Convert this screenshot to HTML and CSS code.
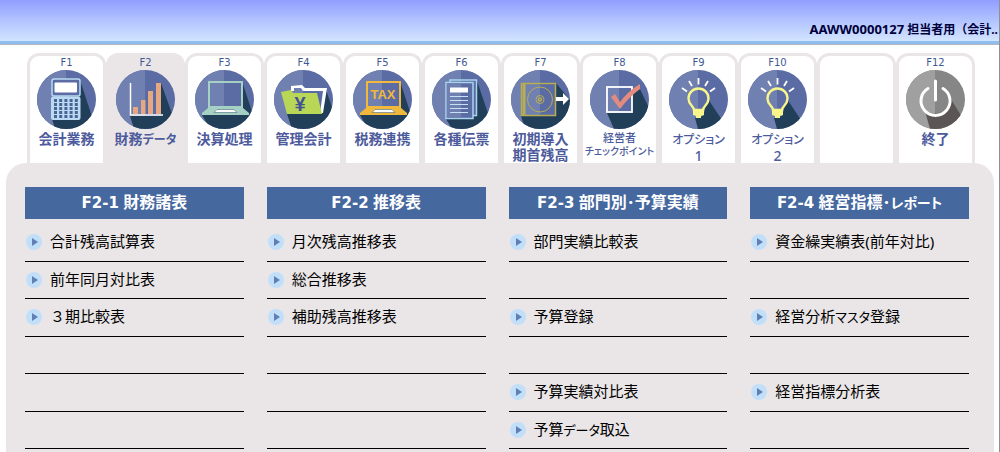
FILE: index.html
```html
<!DOCTYPE html>
<html lang="ja">
<head>
  <meta charset="UTF-8">
  <meta name="viewport" content="width=device-width, initial-scale=1.0">
  <title>財務データ</title>
  <link rel="stylesheet" href="styles.css">
</head>
<body>
  <!-- アイコン共通パーツ -->
  <svg class="defs" width="0" height="0" aria-hidden="true">
    <defs>
      <clipPath id="round"><circle cx="29.5" cy="29.5" r="29.5"/></clipPath>
      <g id="base">
        <rect width="59" height="59" fill="#5b6ba3"/>
        <rect width="29" height="59" fill="#7080b0"/>
      </g>
      <g id="laptop">
        <rect x="14" y="12" width="33" height="25" fill="none" stroke="currentColor" stroke-width="2"/>
        <path d="M13 38H48L54 43V45H7V43Z" fill="currentColor"/>
        <path d="M22 39.500H39L42 42.500H19Z" fill="#fff" stroke="#4a6b80" stroke-width=".6"/>
      </g>
      <g id="bulb">
        <path d="M39 29L59 59H29L26 48L34 46Z" fill="#213f58"/>
        <path d="M25 40C25 36 19.500 35 19.500 28.500A10 10 0 0 1 39.500 28.500C39.500 35 34 36 34 40Z" fill="none" stroke="#f8f58a" stroke-width="2.400"/>
        <path d="M24 39H35V45L32 46V48H27V46L24 45Z" fill="#f8f58a"/>
        <path d="M13 18L18 21.500M20 11L23 16M29.500 8V14.500M39 11L36 16M46 18L41 21.500" stroke="#fff" stroke-width="1.800"/>
      </g>
    </defs>
  </svg>

  <header class="topbar">
    <div class="user"><span class="user-id">AAWW0000127</span> 担当者用（会計..</div>
  </header>

  <nav class="tabs">
    <button class="tab" type="button">
      <span class="key">F1</span>
      <svg class="icon" viewBox="0 0 59 59"><g clip-path="url(#round)">
        <use href="#base"/>
        <path d="M43 10L59 59H18L15 49Z" fill="#213f58"/>
        <rect x="15" y="9" width="28" height="17" rx="2" fill="#5b6ba3" stroke="#b9daf2" stroke-width="1.500"/>
        <rect x="17.500" y="12.500" width="22.500" height="10" rx="1" fill="#fff"/>
        <rect x="14" y="26.500" width="29.500" height="23.500" rx="2" fill="#b9daf2"/>
        <path d="M17 30.500H41M17 34.500H41M17 38.500H41M17 42.500H41M17 46.500H41" stroke="#4b6292" stroke-width="2.800" stroke-dasharray="3 2.200"/>
      </g></svg>
      <span class="label">会計業務</span>
    </button>
    <button class="tab active" type="button">
      <span class="key">F2</span>
      <svg class="icon" viewBox="0 0 59 59"><g clip-path="url(#round)">
        <use href="#base"/>
        <path d="M45 13L59 52V59H18L14 46H45Z" fill="#213f58"/>
        <path d="M17 37H22V44H17ZM25 30H29.500V44H25ZM32 21H37V44H32ZM40 13H45V44H40Z" fill="#e5a883"/>
        <path d="M14.500 13V45H47" fill="none" stroke="#fff" stroke-width="1.500"/>
      </g></svg>
      <span class="label">財務<span class="kana">データ</span></span>
    </button>
    <button class="tab" type="button">
      <span class="key">F3</span>
      <svg class="icon icon-green" viewBox="0 0 59 59"><g clip-path="url(#round)">
        <use href="#base"/>
        <path d="M47 11L59 48V59H15L7 45H54L48 38Z" fill="#213f58"/>
        <use href="#laptop"/>
      </g></svg>
      <span class="label">決算処理</span>
    </button>
    <button class="tab" type="button">
      <span class="key">F4</span>
      <svg class="icon" viewBox="0 0 59 59"><g clip-path="url(#round)">
        <use href="#base"/>
        <path d="M13 44H48L52 20L59 40V59H18Z" fill="#213f58"/>
        <path d="M17 16L28 15L31 18H53L49 43H46L49 21H29L27 18H20V21H17Z" fill="#fff"/>
        <path d="M7 22L17 20L19 23H43L48 44H13Z" fill="#b8d757"/>
        <text x="26" y="41" font-size="20" class="icon-text yen">¥</text>
      </g></svg>
      <span class="label">管理会計</span>
    </button>
    <button class="tab" type="button">
      <span class="key">F5</span>
      <svg class="icon icon-yellow" viewBox="0 0 59 59"><g clip-path="url(#round)">
        <use href="#base"/>
        <path d="M47 11L59 48V59H15L7 45H54L48 38Z" fill="#213f58"/>
        <use href="#laptop"/>
        <text x="30" y="29" font-size="13" class="icon-text tax">TAX</text>
      </g></svg>
      <span class="label">税務連携</span>
    </button>
    <button class="tab" type="button">
      <span class="key">F6</span>
      <svg class="icon" viewBox="0 0 59 59"><g clip-path="url(#round)">
        <use href="#base"/>
        <path d="M45 11L59 52V59H20L14 49L45 46Z" fill="#213f58"/>
        <path d="M18 12V10H44.500V45.500H41" fill="none" stroke="#a9d4ee" stroke-width="1.500"/>
        <rect x="14" y="12.500" width="27" height="36" fill="#5b6ba3" stroke="#a9d4ee" stroke-width="1.500"/>
        <rect x="14.800" y="13.300" width="14.200" height="34.400" fill="#7080b0"/>
        <rect x="18" y="17.500" width="18" height="5" fill="#fff"/>
        <path d="M18 26.500H36M18 30.500H36M18 34.500H36M18 38.500H36M18 42.500H36" stroke="#c5e2f4"/>
      </g></svg>
      <span class="label">各種伝票</span>
    </button>
    <button class="tab" type="button">
      <span class="key">F7</span>
      <svg class="icon" viewBox="0 0 59 59"><g clip-path="url(#round)">
        <use href="#base"/>
        <path d="M45 13L59 30V59H14L10 46H45Z" fill="#213f58"/>
        <rect x="10.500" y="13.500" width="34" height="32" fill="#5b6ba3"/>
        <rect x="10.500" y="13.500" width="18.500" height="32" fill="#7080b0"/>
        <g fill="none" stroke="#b8ad52">
          <rect x="10.500" y="13.500" width="34" height="32" stroke-width="1.500"/>
          <path d="M13 13V46" stroke-width="3"/>
          <circle cx="29" cy="29.500" r="12.500"/>
          <circle cx="29" cy="29.500" r="4"/>
          <circle cx="29" cy="29.500" r="1.500" stroke-width="1.500"/>
        </g>
        <path d="M45 27H52V23L58 29L52 35V31H45Z" fill="#fff"/>
      </g></svg>
      <span class="label">初期導入<br>期首残高</span>
    </button>
    <button class="tab" type="button">
      <span class="key">F8</span>
      <svg class="icon" viewBox="0 0 59 59"><g clip-path="url(#round)">
        <use href="#base"/>
        <path d="M42 24L49 17L59 38V59H24L17 43H42Z" fill="#213f58"/>
        <rect x="17" y="17" width="25" height="25" fill="none" stroke="#fff" stroke-width="1.800"/>
        <path d="M21 27L25 24L30 32Q38 21 50 14V19Q39 27 30 39Z" fill="#e38b7e"/>
      </g></svg>
      <span class="label small">経営者<br><span class="kana">チェックポイント</span></span>
    </button>
    <button class="tab" type="button">
      <span class="key">F9</span>
      <svg class="icon" viewBox="0 0 59 59"><g clip-path="url(#round)">
        <use href="#base"/>
        <use href="#bulb"/>
      </g></svg>
      <span class="label light"><span class="kana">オプション</span><br>1</span>
    </button>
    <button class="tab" type="button">
      <span class="key">F10</span>
      <svg class="icon" viewBox="0 0 59 59"><g clip-path="url(#round)">
        <use href="#base"/>
        <use href="#bulb"/>
      </g></svg>
      <span class="label light"><span class="kana">オプション</span><br>2</span>
    </button>
    <div class="tab"></div>
    <button class="tab" type="button">
      <span class="key">F12</span>
      <svg class="icon" viewBox="0 0 59 59"><g clip-path="url(#round)">
        <rect width="59" height="59" fill="#868686"/>
        <rect width="29" height="59" fill="#a0a0a0"/>
        <path d="M40 21L59 52V59H24L19 41Z" fill="#5b5555"/>
        <circle cx="29.500" cy="30.500" r="13" fill="#868686"/>
        <path d="M29 17.500A13 13 0 0 0 29 43.500Z" fill="#a0a0a0"/>
        <path d="M22 18.500A14.500 14.500 0 1 0 37 18.500M29.500 11V30" fill="none" stroke="#fff" stroke-width="3" stroke-linecap="round"/>
      </g></svg>
      <span class="label">終了</span>
    </button>
  </nav>

  <main class="panel">
    <section class="group">
      <h2><span class="code">F2-1</span> 財務諸表</h2>
      <ul>
        <li><a href="#">合計残高試算表</a></li>
        <li><a href="#">前年同月対比表</a></li>
        <li><a href="#">３期比較表</a></li>
        <li></li>
        <li></li>
        <li></li>
      </ul>
    </section>
    <section class="group">
      <h2><span class="code">F2-2</span> 推移表</h2>
      <ul>
        <li><a href="#">月次残高推移表</a></li>
        <li><a href="#">総合推移表</a></li>
        <li><a href="#">補助残高推移表</a></li>
        <li></li>
        <li></li>
        <li></li>
      </ul>
    </section>
    <section class="group">
      <h2><span class="code">F2-3</span> 部門別･予算実績</h2>
      <ul>
        <li><a href="#">部門実績比較表</a></li>
        <li></li>
        <li><a href="#">予算登録</a></li>
        <li></li>
        <li><a href="#">予算実績対比表</a></li>
        <li><a href="#">予算<span class="kana">データ</span>取込</a></li>
      </ul>
    </section>
    <section class="group">
      <h2><span class="code">F2-4</span> 経営指標･<span class="kana">レポート</span></h2>
      <ul>
        <li><a href="#">資金繰実績表(前年対比)</a></li>
        <li></li>
        <li><a href="#">経営分析<span class="kana">マスタ</span>登録</a></li>
        <li></li>
        <li><a href="#">経営指標分析表</a></li>
        <li></li>
      </ul>
    </section>
  </main>
</body>
</html>
```
FILE: styles.css
```css
* {
  box-sizing: border-box;
}

body {
  margin: 0;
  min-height: 100vh;
  display: flex;
  flex-direction: column;
  border-right: 1px solid #8f8f99;
  background-color: #fff;
  font-family: "Noto Sans", "Noto Sans CJK JP", sans-serif;
}

.defs {
  position: absolute;
}

/* ヘッダー */
.topbar {
  height: 45px;
  display: flex;
  justify-content: flex-end;
  align-items: flex-end;
  padding: 0 1px 4px 0;
  background: linear-gradient(#929eff, #b4c6ff 50%, #d8e9ff);
  border-bottom: 1px solid #b5b5bd;
  box-shadow: inset 0 -3px #8fbdf0;
}

.user {
  color: #00003c;
  font-size: 12px;
  font-weight: bold;
  line-height: 20px;
  white-space: nowrap;
}

.user-id {
  font-size: 13px;
}

/* カタカナは詰めて小さめに */
.kana {
  font-size: 13px;
  font-feature-settings: "palt";
}

/* タブ */
.tabs {
  display: grid;
  grid-template-columns: repeat(12, minmax(0, 1fr));
  margin: 8px 24px 0 27px;
}

.tab {
  height: 110px;
  display: flex;
  flex-direction: column;
  align-items: center;
  margin: 0;
  padding: 0;
  border: 3px solid #eae6e7;
  border-bottom: none;
  border-radius: 12px 12px 0 0;
  background-color: #fff;
  color: #4d5b9c;
  font: inherit;
  cursor: pointer;
}

.tab.active {
  background-color: #eae6e7;
}

.key {
  color: #3f5a92;
  font-family: "DejaVu Sans", sans-serif;
  font-size: 10px;
  line-height: 14px;
}

.icon {
  width: 59px;
  height: 59px;
  flex: none;
}

.icon-green {
  color: #a5d1c4;
}

.icon-yellow {
  color: #f0b93c;
}

.icon-text {
  font-family: "Liberation Sans", sans-serif;
  font-weight: bold;
  text-anchor: middle;
}

.yen {
  fill: #44538f;
}

.tax {
  fill: #f0b93c;
}

.label {
  margin: 2px -3px 0;
  font-size: 14px;
  font-weight: bold;
  line-height: 16px;
  white-space: nowrap;
}

.label .kana {
  font-size: 12px;
}

.label.light {
  font-weight: 500;
}

.label.small {
  font-size: 11px;
  font-weight: 500;
  line-height: 13px;
}

.label.small .kana {
  font-size: 10px;
}

/* メニュー */
.panel {
  flex: 1;
  display: grid;
  grid-template-columns: repeat(4, minmax(0, 1fr));
  gap: 23px;
  align-items: start;
  margin: 0 5px 0 6px;
  padding: 24px 25px 3px 19px;
  border-radius: 20px 20px 0 0;
  background-color: #eae6e7;
}

.group h2 {
  height: 32px;
  margin: 0;
  background-color: #45689f;
  color: #fff;
  font-size: 16px;
  line-height: 30px;
  text-align: center;
}

.group h2 .kana {
  font-size: 14px;
}

.code {
  font-family: "DejaVu Sans", sans-serif;
  font-size: 15px;
}

.group ul {
  margin: 5px 0 0;
  padding: 0;
  list-style: none;
}

.group li {
  height: 37px;
  border-bottom: 1px solid #000;
}

.group li:nth-child(odd) {
  height: 38px;
}

.group a {
  position: relative;
  display: block;
  padding-left: 25px;
  color: #000;
  font-size: 15px;
  line-height: 35px;
  text-decoration: none;
}

/* 丸に三角のマーク */
.group a::before {
  content: "";
  position: absolute;
  top: 10px;
  left: 1px;
  width: 16px;
  height: 16px;
  border-radius: 50%;
  background-color: #c2dffa;
}

.group a::after {
  content: "";
  position: absolute;
  top: 14px;
  left: 7px;
  border-top: 4px solid transparent;
  border-bottom: 4px solid transparent;
  border-left: 6px solid #6080b5;
}
```
